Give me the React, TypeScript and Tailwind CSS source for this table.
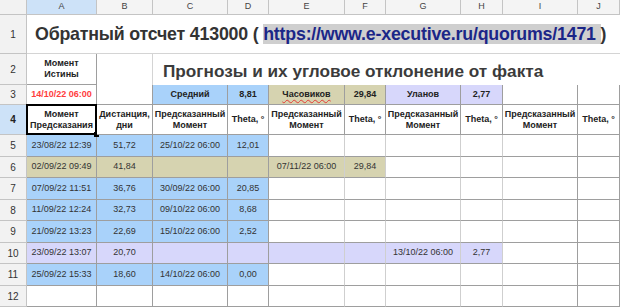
import React from 'react';

type Fill = 'blue' | 'khaki' | 'lilac' | 'none';

const fillClass: Record<Fill, string> = {
  blue: 'bg-[#a9d2fa]',
  khaki: 'bg-[#d6d3b0]',
  lilac: 'bg-[#d7d7fb]',
  none: 'bg-white'
};

const cols = ['A', 'B', 'C', 'D', 'E', 'F', 'G', 'H', 'I', 'J'];

const widths = [
  'w-[70px]',
  'w-[56px]',
  'w-[75px]',
  'w-[41px]',
  'w-[76px]',
  'w-[41px]',
  'w-[75px]',
  'w-[42px]',
  'w-[75px]',
  'w-[42px]'
];

interface DataRow {
  n: number;
  h: string;
  cells: { text?: string; fill: Fill }[];
}

const row = (n: number, h: string, fills: Fill[], texts: (string | undefined)[]): DataRow => ({
  n,
  h,
  cells: fills.map((fill, i) => ({ fill, text: texts[i] }))
});

const B: Fill = 'blue';
const K: Fill = 'khaki';
const L: Fill = 'lilac';
const N: Fill = 'none';

const data: DataRow[] = [
  row(5, 'h-[22px]', [B, B, B, B, N, N, N, N, N, N], ['23/08/22 12:39', '51,72', '25/10/22 06:00', '12,01']),
  row(6, 'h-[21px]', [K, K, K, K, K, K, N, N, N, N], ['02/09/22 09:49', '41,84', '', '', '07/11/22 06:00', '29,84']),
  row(7, 'h-[22px]', [B, B, B, B, N, N, N, N, N, N], ['07/09/22 11:51', '36,76', '30/09/22 06:00', '20,85']),
  row(8, 'h-[21px]', [B, B, B, B, N, N, N, N, N, N], ['11/09/22 12:24', '32,73', '09/10/22 06:00', '8,68']),
  row(9, 'h-[22px]', [B, B, B, B, N, N, N, N, N, N], ['21/09/22 13:23', '22,69', '15/10/22 06:00', '2,52']),
  row(10, 'h-[21px]', [L, L, L, L, L, L, L, L, N, N], ['23/09/22 13:07', '20,70', '', '', '', '', '13/10/22 06:00', '2,77']),
  row(11, 'h-[22px]', [B, B, B, B, N, N, N, N, N, N], ['25/09/22 15:33', '18,60', '14/10/22 06:00', '0,00']),
  row(12, 'h-[21px]', [N, N, N, N, N, N, N, N, N, N], [])
];

const headers = [
  ['Момент', 'Предсказания'],
  ['Дистанция,', 'дни'],
  ['Предсказанный', 'Момент'],
  ['Theta, °'],
  ['Предсказанный', 'Момент'],
  ['Theta, °'],
  ['Предсказанный', 'Момент'],
  ['Theta, °'],
  ['Предсказанный', 'Момент'],
  ['Theta, °']
];

const RowHead = ({ n, active }: { n: number; active?: boolean }) => (
  <div
    className={`flex w-[27px] shrink-0 items-center justify-center border-r border-b border-[#c4c4c4] text-[10px] ${
      active ? 'bg-[#cde2f8] font-bold text-[#222]' : 'bg-[#f2f2f2] text-[#333]'
    }`}
  >
    {n}
  </div>
);

const Cell = ({
  w,
  fill,
  bold,
  light,
  children
}: {
  w: string;
  fill: Fill;
  bold?: boolean;
  light?: boolean;
  children?: React.ReactNode;
}) => (
  <div
    className={`flex shrink-0 items-center justify-center border-r border-b whitespace-nowrap ${
      light ? 'border-r-[#cfcfcf] border-b-[#9e9e9e]' : 'border-[#9e9e9e]'
    } ${bold ? 'text-[9px] font-bold text-[#222]' : 'text-[9px] text-[#333]'} ${fillClass[fill]} ${w}`}
  >
    {children}
  </div>
);

export default function App() {
  return (
    <div
      className="w-[620px] h-[307px] overflow-hidden bg-white text-[#333]"
      style={{ fontFamily: '"Liberation Sans", Arial, sans-serif' }}
    >
      {/* column letters */}
      <div className="flex h-[15px]">
        <div className="w-[27px] shrink-0 border-r border-b border-[#c4c4c4] bg-[#f2f2f2]" />
        {cols.map((c, i) => (
          <div
            key={c}
            className={`flex shrink-0 items-center justify-center border-r border-b border-[#c4c4c4] text-[9px] text-[#444] ${
              i === 0 ? 'bg-[#cde2f8]' : 'bg-[#f4f4f4]'
            } ${widths[i]}`}
          >
            {c}
          </div>
        ))}
      </div>

      {/* row 1 */}
      <div className="flex h-[39px]">
        <RowHead n={1} />
        <div className="flex min-w-0 flex-1 items-center border-b border-[#d4d4d4] pl-[8px]">
          <span className="whitespace-nowrap text-[17.8px] leading-[22px] font-bold tracking-[-0.2px] text-[#333]">
            Обратный отсчет 413000 ({' '}
            <span className="bg-[#cfcfcf] text-[#1b2688]">https://www.e-xecutive.ru/quorums/1471 </span>)
          </span>
        </div>
      </div>

      {/* row 2 */}
      <div className="flex h-[31px]">
        <RowHead n={2} />
        <div className="flex w-[70px] shrink-0 flex-col items-center justify-center border-r border-b border-[#9e9e9e] text-[9px] font-bold leading-[11px] text-[#222]">
          <span>Момент</span>
          <span>Истины</span>
        </div>
        <div className="w-[56px] shrink-0 border-r border-[#d4d4d4]" />
        <div className="flex min-w-0 flex-1 items-center pl-[10px] pt-[4px]">
          <span className="whitespace-nowrap text-[17.2px] font-bold text-[#3b3b3b]">
            Прогнозы и их угловое отклонение от факта
          </span>
        </div>
      </div>

      {/* row 3 */}
      <div className="flex h-[20px]">
        <RowHead n={3} />
        <div className="flex w-[70px] shrink-0 items-center justify-center border-r border-b border-[#9e9e9e] text-[9px] font-bold text-[#ff3d3d]">
          14/10/22 06:00
        </div>
        <div className="w-[56px] shrink-0 border-r border-b border-[#9e9e9e]" />
        <Cell w={widths[2]} fill="blue" bold>Средний</Cell>
        <Cell w={widths[3]} fill="blue" bold>8,81</Cell>
        <Cell w={widths[4]} fill="khaki" bold>
          <span className="underline decoration-[#e53935] decoration-wavy decoration-[1px] underline-offset-2">Часовиков</span>
        </Cell>
        <Cell w={widths[5]} fill="khaki" bold>29,84</Cell>
        <Cell w={widths[6]} fill="lilac" bold>Уланов</Cell>
        <Cell w={widths[7]} fill="lilac" bold>2,77</Cell>
        <Cell w={widths[8]} fill="none" />
        <Cell w={widths[9]} fill="none" />
      </div>

      {/* row 4 */}
      <div className="flex h-[30px]">
        <RowHead n={4} active />
        {headers.map((lines, i) => (
          <div
            key={i}
            className={`relative flex shrink-0 flex-col items-center justify-center border-r border-b border-[#9e9e9e] bg-white text-[9px] font-bold leading-[11px] text-[#222] ${widths[i]}`}
          >
            {lines.map((l) => (
              <span key={l} className="whitespace-nowrap">{l}</span>
            ))}
            {i === 0 && (
              <>
                <div className="pointer-events-none absolute -left-[1px] -top-[1px] -right-[1px] -bottom-[1px] border-2 border-black" />
                <div className="absolute -right-[3px] -bottom-[3px] h-[5px] w-[5px] bg-black" />
              </>
            )}
          </div>
        ))}
      </div>

      {/* data rows */}
      {data.map((r) => (
        <div key={r.n} className={`flex ${r.h}`}>
          <RowHead n={r.n} />
          {r.cells.map((c, i) => (
            <Cell key={i} w={widths[i]} fill={c.fill} light={i >= 4 && i <= 7}>
              {c.text}
            </Cell>
          ))}
        </div>
      ))}
    </div>
  );
}
